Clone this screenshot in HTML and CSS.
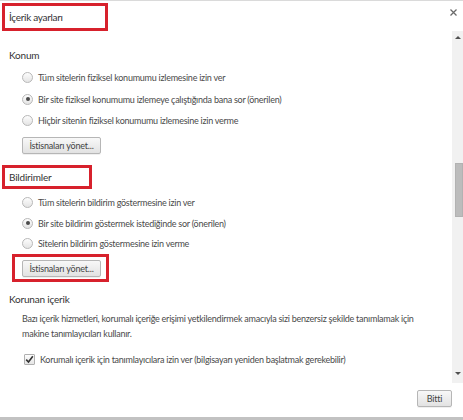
FILE: index.html
```html
<!DOCTYPE html>
<html lang="tr">
<head>
    <meta charset="UTF-8">
    <title>İçerik ayarları</title>
    <link rel="stylesheet" href="styles.css">
</head>
<body>
    <div class="dialog">
        <!-- Header -->
        <div class="header">
            <div class="mark mark-title">
                <h1 class="title">İçerik ayarları</h1>
            </div>
            <svg class="close" width="7" height="7" viewBox="0 0 7 7">
                <path d="M0.5 0.5 L6.5 6.5 M6.5 0.5 L0.5 6.5" stroke="#6a6a6a" stroke-width="1.3"/>
            </svg>
        </div>

        <!-- Scroll area -->
        <div class="body">
            <div class="content">
                <section class="section konum">
                    <h2 class="section-title">Konum</h2>
                    <div class="options">
                        <label class="option"><span class="radio"></span>Tüm sitelerin fiziksel konumumu izlemesine izin ver</label>
                        <label class="option"><span class="radio checked"></span>Bir site fiziksel konumumu izlemeye çalıştığında bana sor (önerilen)</label>
                        <label class="option"><span class="radio"></span>Hiçbir sitenin fiziksel konumumu izlemesine izin verme</label>
                    </div>
                    <div class="btn-row">
                        <button class="btn">İstisnaları yönet...</button>
                    </div>
                </section>

                <section class="section bildirim">
                    <div class="mark mark-section">
                        <h2 class="section-title">Bildirimler</h2>
                    </div>
                    <div class="options tight">
                        <label class="option"><span class="radio"></span>Tüm sitelerin bildirim göstermesine izin ver</label>
                        <label class="option"><span class="radio checked"></span>Bir site bildirim göstermek istediğinde sor (önerilen)</label>
                        <label class="option"><span class="radio"></span>Sitelerin bildirim göstermesine izin verme</label>
                    </div>
                    <div class="mark mark-btn">
                        <button class="btn">İstisnaları yönet...</button>
                    </div>
                </section>

                <section class="section korunan">
                    <h2 class="section-title">Korunan içerik</h2>
                    <p class="desc">Bazı içerik hizmetleri, korumalı içeriğe erişimi yetkilendirmek amacıyla sizi benzersiz şekilde tanımlamak için makine tanımlayıcıları kullanır.</p>
                    <label class="option check-row"><span class="checkbox">
                        <svg width="9" height="9" viewBox="0 0 9 9"><path d="M1.2 4.6 L3.5 7 L7.8 1.2" fill="none" stroke="#333" stroke-width="1.6"/></svg>
                    </span>Korumalı içerik için tanımlayıcılara izin ver (bilgisayarı yeniden başlatmak gerekebilir)</label>
                </section>
            </div>

            <!-- Scrollbar -->
            <div class="scrollbar">
                <div class="sb-arrow up"></div>
                <div class="sb-thumb"></div>
                <div class="sb-arrow down"></div>
            </div>
        </div>

        <!-- Footer -->
        <div class="footer">
            <button class="btn btn-done">Bitti</button>
        </div>
    </div>
</body>
</html>
```

FILE: styles.css
```css
html, body {
    margin: 0;
    padding: 0;
}
body {
    font-family: Lato, "Open Sans", Arial, sans-serif;
    font-size: 9px;
    letter-spacing: -0.25px;
    color: #4a4a4a;
    background: #fff;
    width: 463px;
    height: 420px;
    overflow: hidden;
}
.dialog {
    height: 420px;
    box-sizing: border-box;
    border-top: 1px solid #dadada;
    border-bottom: 3px solid #c2c2c2;
    display: flex;
    flex-direction: column;
}

/* Red annotation boxes */
.mark {
    border: 3px solid #d7212c;
    box-sizing: border-box;
}

/* Header */
.header {
    height: 30px;
    display: flex;
    align-items: flex-start;
    justify-content: space-between;
}
.mark-title {
    margin: 2px 0 0 2px;
    width: 106px;
    height: 28px;
    padding-left: 4px;
    display: flex;
    align-items: center;
}
.title {
    margin: 0;
    font-size: 10px;
    letter-spacing: -0.3px;
    font-weight: normal;
    color: #333;
}
.close {
    margin: 8px 6px 0 0;
}

/* Body */
.body {
    flex: 1;
    display: flex;
    min-height: 0;
}
.content {
    flex: 1;
    padding-left: 9px;
}
.section-title {
    margin: 0;
    font-size: 10px;
    letter-spacing: -0.2px;
    font-weight: normal;
    line-height: 16px;
    color: #333;
}
.konum {
    padding-top: 16px;
}
.options {
    margin-top: 4px;
}
.option {
    display: flex;
    align-items: center;
    height: 21.5px;
    padding-left: 13px;
    white-space: nowrap;
}
.options.tight .option {
    height: 20.5px;
}
.radio {
    width: 11px;
    height: 11px;
    box-sizing: border-box;
    border-radius: 50%;
    border: 1px solid #b8b8b8;
    background: linear-gradient(#fdfdfd, #e4e4e4);
    margin-right: 5px;
    position: relative;
    flex: none;
}
.radio.checked::after {
    content: '';
    position: absolute;
    left: 2.5px;
    top: 2.5px;
    width: 4px;
    height: 4px;
    border-radius: 50%;
    background: #4a4a4a;
}
.btn-row {
    padding-left: 13px;
    margin-top: 5px;
}
.btn {
    font-family: inherit;
    font-size: 9px;
    letter-spacing: -0.2px;
    color: #444;
    height: 17px;
    padding: 0 4px;
    border: 1px solid #b6b6b6;
    border-radius: 2px;
    background: linear-gradient(#f8f8f8, #e2e2e2);
    box-shadow: 0 1px 0 rgba(0,0,0,0.06);
    line-height: 15px;
    white-space: nowrap;
}
.content .btn {
    width: 79px;
}
.bildirim {
    margin-top: 11px;
}
.mark-section {
    margin-left: -7px;
    width: 90px;
    height: 24px;
    padding-left: 4px;
    display: flex;
    align-items: center;
}
.mark-btn {
    display: inline-block;
    margin-left: 3px;
    padding: 3px 5px 2px 7px;
}
.korunan {
    margin-top: 9px;
}
.desc {
    margin: 4px 0 0;
    padding-left: 13px;
    width: 400px;
    line-height: 15px;
}
.check-row {
    margin-top: 8px;
    padding-left: 15px;
}
.checkbox {
    width: 11px;
    height: 11px;
    box-sizing: border-box;
    border: 1px solid #b0b0b0;
    border-radius: 1px;
    background: linear-gradient(#fdfdfd, #e6e6e6);
    margin-right: 5px;
    display: flex;
    align-items: center;
    justify-content: center;
    flex: none;
}

/* Scrollbar */
.scrollbar {
    width: 11px;
    background: #f1f1f1;
    display: flex;
    flex-direction: column;
    align-items: center;
}
.sb-arrow {
    width: 0;
    height: 0;
    border-style: solid;
}
.sb-arrow.up {
    margin-top: 5px;
    border-width: 0 3px 3px 3px;
    border-color: transparent transparent #505050 transparent;
}
.sb-arrow.down {
    margin-top: auto;
    margin-bottom: 8px;
    border-width: 3px 3px 0 3px;
    border-color: #505050 transparent transparent transparent;
}
.sb-thumb {
    margin-top: 124px;
    width: 8px;
    margin-left: 2px;
    height: 54px;
    box-sizing: border-box;
    background: #bcbcbc;
    border: 1px solid #b2b2b2;
}

/* Footer */
.footer {
    height: 34px;
    display: flex;
    justify-content: flex-end;
    align-items: flex-start;
}
.btn-done {
    margin: 7px 11px 0 0;
    width: 35px;
    padding: 0;
}
```
